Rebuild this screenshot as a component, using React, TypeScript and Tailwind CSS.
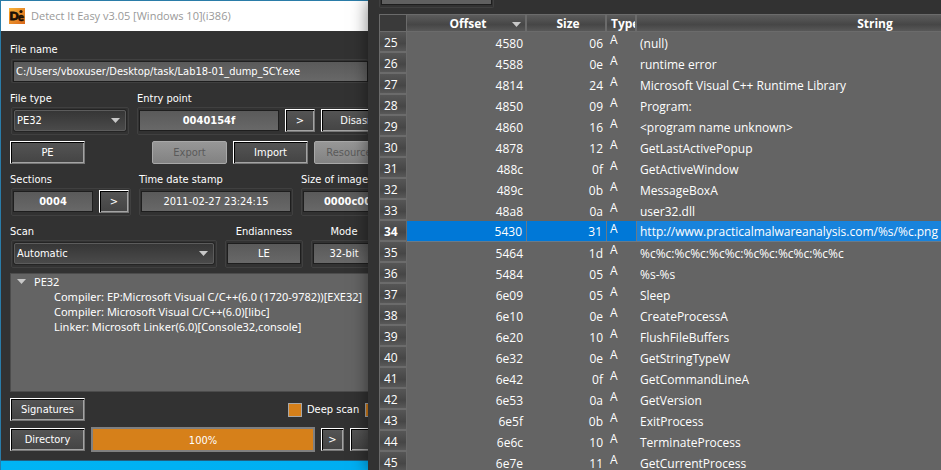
import type { ReactNode } from "react";

const inputSkin =
  "h-[21px] min-w-0 border border-[#1e1e1e] bg-linear-to-b from-[#5a5a5a] to-[#686868] text-white outline-none";
const frameSkin = "flex h-7 items-center rounded-xs border border-[#404040] pt-px pb-0.5";

const rows: [string, string, string, string][] = [
  ["25", "4580", "06", "(null)"],
  ["26", "4588", "0e", "runtime error"],
  ["27", "4814", "24", "Microsoft Visual C++ Runtime Library"],
  ["28", "4850", "09", "Program:"],
  ["29", "4860", "16", "<program name unknown>"],
  ["30", "4878", "12", "GetLastActivePopup"],
  ["31", "488c", "0f", "GetActiveWindow"],
  ["32", "489c", "0b", "MessageBoxA"],
  ["33", "48a8", "0a", "user32.dll"],
  ["34", "5430", "31", "http://www.practicalmalwareanalysis.com/%s/%c.png"],
  ["35", "5464", "1d", "%c%c:%c%c:%c%c:%c%c:%c%c:%c%c"],
  ["36", "5484", "05", "%s-%s"],
  ["37", "6e09", "05", "Sleep"],
  ["38", "6e10", "0e", "CreateProcessA"],
  ["39", "6e20", "10", "FlushFileBuffers"],
  ["40", "6e32", "0e", "GetStringTypeW"],
  ["41", "6e42", "0f", "GetCommandLineA"],
  ["42", "6e53", "0a", "GetVersion"],
  ["43", "6e5f", "0b", "ExitProcess"],
  ["44", "6e6c", "10", "TerminateProcess"],
  ["45", "6e7e", "11", "GetCurrentProcess"],
];

function Caret({ className = "" }: { className?: string }) {
  return (
    <svg viewBox="0 0 9 5" className={`h-[5px] w-[9px] shrink-0 fill-[#c8c8c8] ${className}`} aria-hidden="true">
      <path d="M0 0H9L4.500 5Z" />
    </svg>
  );
}

function PushButton({ children, width = "w-[75px]", disabled }: { children: ReactNode; width?: string; disabled?: boolean }) {
  const skin = disabled
    ? "rounded-xs border-[#a8a8a8] bg-linear-to-b from-[#979797] to-[#828282] text-[#5a5a5a]"
    : "border-t-white border-l-white border-r-[#777] border-b-[#777] bg-linear-to-b from-[#555] to-[#444] text-white shadow-[inset_1px_1px_0_#000,inset_-1px_-1px_0_#a4a4a4]";
  return (
    <button type="button" disabled={disabled} className={`h-[23px] shrink-0 border pt-px text-center leading-4 whitespace-nowrap ${width} ${skin}`}>
      {children}
    </button>
  );
}

function Drop({ id, value, width }: { id: string; value: string; width: string }) {
  return (
    <div className={`relative ${width}`}>
      <select
        id={id}
        defaultValue={value}
        className="block h-[21px] w-full appearance-none rounded-xs border border-[#5c5c5c] bg-linear-to-b from-[#363636] to-[#4a4a4a] pt-px pl-0.5 text-white shadow-[0_0_0_1px_#242424] outline-none"
      >
        <option>{value}</option>
      </select>
      <Caret className="pointer-events-none absolute top-2 right-1.5" />
    </div>
  );
}

function Label({ htmlFor, children, center }: { htmlFor: string; children: ReactNode; center?: boolean }) {
  return (
    <label htmlFor={htmlFor} className={`block h-[17px] leading-[18px] whitespace-nowrap ${center ? "text-center" : ""}`}>
      {children}
    </label>
  );
}

function Logo() {
  return (
    <svg viewBox="0 0 16 16" className="size-4 shrink-0" aria-hidden="true">
      <defs>
        <linearGradient id="logo" x1="0" y1="0" x2="1" y2="1">
          <stop offset="0" stopColor="#f9b53a" />
          <stop offset="1" stopColor="#d9661a" />
        </linearGradient>
      </defs>
      <rect width="16" height="16" fill="url(#logo)" />
      <text x="0.500" y="12" fontSize="12" fontWeight="900" fontFamily="Lato, sans-serif" fill="#1a0f05" stroke="#1a0f05" strokeWidth="0.800">D</text>
      <text x="9" y="13" fontSize="11" fontWeight="900" fontFamily="Lato, sans-serif" fill="#1a0f05" stroke="#1a0f05" strokeWidth="0.600">e</text>
      <circle cx="12" cy="3.500" r="1.600" fill="#1a0f05" />
    </svg>
  );
}

function MainWindow() {
  return (
    <section className="flex w-[368px] shrink-0 flex-col overflow-hidden border-t border-l border-[#2a7ca8]">
      <header className="flex h-[30px] shrink-0 items-center gap-1.5 bg-white pl-2 font-['Open_Sans',sans-serif] text-[11px] whitespace-nowrap text-[#999]">
        <Logo />
        <h1>Detect It Easy v3.05 [Windows 10](i386)</h1>
      </header>
      <div className="border-b border-[#225f80] bg-[#323232] pt-2.5 pb-2 pl-[9px] text-white">
        <Label htmlFor="file">File name</Label>
        <div className="mt-px ml-px flex h-6 rounded-xs border border-r-0 border-[#404040] pt-px pl-px">
          <input id="file" readOnly defaultValue="C:/Users/vboxuser/Desktop/task/Lab18-01_dump_SCY.exe" className={`${inputSkin} flex-1 px-0.5`} />
        </div>

        <div className="mt-[7px] flex gap-2">
          <div className="w-[119px] shrink-0">
            <Label htmlFor="type">File type</Label>
            <div className={`${frameSkin} ml-px px-0.5`}>
              <Drop id="type" value="PE32" width="w-full" />
            </div>
          </div>
          <div className="min-w-0 flex-1">
            <Label htmlFor="entry">Entry point</Label>
            <div className={`${frameSkin} gap-1.5 pl-px`}>
              <input id="entry" readOnly defaultValue="0040154f" className={`${inputSkin} w-[140px] shrink-0 text-center font-bold`} />
              <PushButton width="w-[30px]">&gt;</PushButton>
              <PushButton>Disasm</PushButton>
            </div>
          </div>
        </div>

        <div className="mt-1.5 flex gap-1.5">
          <PushButton>PE</PushButton>
          <div className="ml-[61px] flex gap-1.5">
            <PushButton disabled>Export</PushButton>
            <PushButton>Import</PushButton>
            <PushButton disabled>Resources</PushButton>
          </div>
        </div>

        <div className="mt-[7px] flex gap-2">
          <div className="w-[121px] shrink-0">
            <Label htmlFor="sections">Sections</Label>
            <div className={`${frameSkin} ml-px gap-1.5 pl-px`}>
              <input id="sections" readOnly defaultValue="0004" className={`${inputSkin} w-[80px] text-center font-bold`} />
              <PushButton width="w-[30px]">&gt;</PushButton>
            </div>
          </div>
          <div className="w-[154px] shrink-0">
            <Label htmlFor="stamp">Time date stamp</Label>
            <div className={`${frameSkin} px-px`}>
              <input id="stamp" readOnly defaultValue="2011-02-27 23:24:15" className={`${inputSkin} w-full text-center`} />
            </div>
          </div>
          <div className="w-[100px] shrink-0">
            <Label htmlFor="size">Size of image</Label>
            <div className={`${frameSkin} px-px`}>
              <input id="size" readOnly defaultValue="0000c000" className={`${inputSkin} w-full text-center font-bold`} />
            </div>
          </div>
        </div>

        <div className="mt-[7px] flex gap-2">
          <div className="w-[207px] shrink-0">
            <Label htmlFor="scan">Scan</Label>
            <div className={`${frameSkin} ml-px px-0.5`}>
              <Drop id="scan" value="Automatic" width="w-full" />
            </div>
          </div>
          <div className="w-[78px] shrink-0">
            <Label htmlFor="endian" center>Endianness</Label>
            <div className={`${frameSkin} px-px`}>
              <input id="endian" readOnly defaultValue="LE" className={`${inputSkin} w-full text-center`} />
            </div>
          </div>
          <div className="w-[66px] shrink-0">
            <Label htmlFor="mode" center>Mode</Label>
            <div className={`${frameSkin} px-px`}>
              <input id="mode" readOnly defaultValue="32-bit" className={`${inputSkin} w-full text-center`} />
            </div>
          </div>
        </div>

        <div className="mt-[5px] h-[119px] border border-r-0 border-[#4c4c4c] bg-[#646464] pl-1.5 font-['Noto_Sans',sans-serif] leading-[15px] whitespace-nowrap">
          <div className="flex items-center gap-2">
            <Caret />
            <span>PE32</span>
          </div>
          <ul className="pl-[37px]">
            <li>Compiler: EP:Microsoft Visual C/C++(6.0 (1720-9782))[EXE32]</li>
            <li>Compiler: Microsoft Visual C/C++(6.0)[libc]</li>
            <li>Linker: Microsoft Linker(6.0)[Console32,console]</li>
          </ul>
        </div>

        <div className="mt-1.5 flex items-center">
          <PushButton>Signatures</PushButton>
          <label className="ml-[203px] flex shrink-0 items-center gap-[5px] whitespace-nowrap">
            <input type="checkbox" defaultChecked className="size-3.5 appearance-none border border-[#a8a8a8] bg-[#d6801a]" />
            <span className="w-[53px] pt-0.5">Deep scan</span>
          </label>
          <input type="checkbox" defaultChecked aria-label="Heuristic scan" className="ml-[5px] size-3.5 shrink-0 appearance-none border border-[#a8a8a8] bg-[#d6801a]" />
        </div>

        <div className="mt-1.5 flex items-center gap-1.5">
          <PushButton>Directory</PushButton>
          <div role="progressbar" aria-valuenow={100} className="h-[25px] w-[224px] shrink-0 border-2 border-[#808080] bg-[#d6801a] text-center leading-[23px]">
            100%
          </div>
          <PushButton width="w-[23px]">&gt;</PushButton>
          <PushButton>{""}</PushButton>
        </div>
      </div>
    </section>
  );
}

const headSkin =
  "h-[18px] border-t border-r-2 border-b border-[#6b6b6b] bg-linear-to-b from-[#5c5c5c] via-[#464646] via-60% to-[#585858] p-0 pt-px leading-[15px] font-bold";

function StringsWindow() {
  return (
    <section className="z-10 flex min-w-0 flex-1 flex-col overflow-hidden bg-[#323232] pl-[11px] font-['Open_Sans',sans-serif] text-xs text-white shadow-[0_0_16px_rgba(0,0,0,0.5)]">
      <div className="mb-1.5 h-2 w-[115px] shrink-0 rounded-b-xs border border-t-0 border-[#404040] px-px">
        <input aria-label="Filter" className="block h-[5px] w-full border border-t-0 border-[#1e1e1e] bg-[#606060]" />
      </div>
      <table className="w-[736px] table-fixed border-separate border-spacing-0 border-l border-[#6b6b6b] bg-[#646464]">
        <colgroup>
          <col className="w-[27px]" />
          <col className="w-[120px]" />
          <col className="w-[80px]" />
          <col className="w-[30px]" />
          <col />
        </colgroup>
        <thead>
          <tr>
            <td className="border-t border-r border-b border-[#6b6b6b] bg-[#3a3a3a] p-0" />
            <th className={headSkin}>
              <span className="relative block pl-1">
                Offset
                <Caret className="absolute top-1.5 right-1" />
              </span>
            </th>
            <th className={`${headSkin} pl-1`}>Size</th>
            <th className={`${headSkin} overflow-hidden pl-1`}>Type</th>
            <th className={headSkin}>String</th>
          </tr>
        </thead>
        <tbody>
          {rows.map(([n, offset, size, text]) => {
            const on = n === "34";
            const cell = on ? "border-r border-b border-[#6a7a88] bg-[#0078d7]" : "";
            return (
              <tr key={n} className="h-[21px] whitespace-nowrap">
                <th className={`border-r border-b-2 border-[#6b6b6b] bg-linear-to-b from-[#565656] via-[#464646] via-60% to-[#585858] p-0 pt-0.5 pl-1 text-left leading-4 ${on ? "font-bold" : "font-normal"}`}>
                  {n}
                </th>
                <td className={`p-0 pt-0.5 pr-1 text-right leading-4 ${cell}`}>{offset}</td>
                <td className={`p-0 pt-0.5 pr-1 text-right leading-4 ${cell}`}>{size}</td>
                <td className={`p-0 pl-[3px] align-top leading-4 ${cell}`}>A</td>
                <td className={`p-0 pt-0.5 pl-[3px] leading-4 ${on ? "border-b border-[#6a7a88] bg-[#1883dc]" : ""}`}>{text}</td>
              </tr>
            );
          })}
        </tbody>
      </table>
    </section>
  );
}

export default function App() {
  return (
    <main className="flex h-screen items-stretch overflow-hidden bg-linear-to-r from-[#00b4f4] to-[#00a4ee] font-['DejaVu_Sans_Condensed','Noto_Sans',sans-serif] text-[11px]">
      <MainWindow />
      <StringsWindow />
    </main>
  );
}
